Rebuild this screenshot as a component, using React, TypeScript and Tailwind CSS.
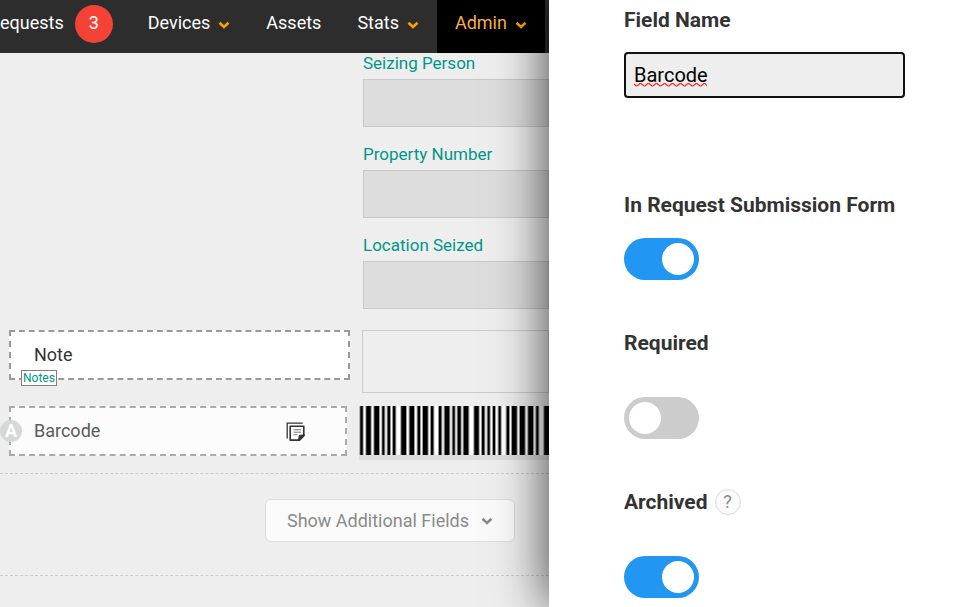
import { useId, useState } from "react";

const menu = [
  { label: "Devices", arrow: true, active: false },
  { label: "Assets", arrow: false, active: false },
  { label: "Stats", arrow: true, active: false },
  { label: "Admin", arrow: true, active: true },
];

// [start, width] of each bar, in thirds of a pixel
const bars = [
  [4, 7], [22, 13], [46, 14], [70, 6], [86, 7], [102, 7], [127, 14],
  [152, 13], [176, 7], [192, 14], [216, 7], [240, 7], [257, 14], [281, 6],
  [296, 9], [314, 14], [346, 13], [369, 7], [386, 6], [402, 6], [419, 6],
  [443, 7], [459, 14], [483, 14], [508, 14], [532, 6], [556, 18],
];

function Chevron() {
  return (
    <svg className="h-2 w-3 shrink-0" viewBox="0 0 12 8" fill="none" stroke="currentColor" strokeWidth="2.6">
      <path d="M1.5 1.700 L6 6 L10.500 1.700" />
    </svg>
  );
}

function Field({ label }: { label: string }) {
  const id = useId();
  return (
    <div>
      <label htmlFor={id} className="block text-[17px] leading-5 text-[#009688]">
        {label}
      </label>
      <input
        id={id}
        disabled
        className="mt-1.5 block h-12 w-full border border-[#c8c8c8] bg-[#dddddd] px-3"
      />
    </div>
  );
}

function Toggle({ id, initial }: { id: string; initial: boolean }) {
  const [on, setOn] = useState(initial);
  return (
    <div className="relative h-[42px] w-[75px]">
      <input
        id={id}
        type="checkbox"
        checked={on}
        onChange={(e) => setOn(e.target.checked)}
        className="peer block h-full w-full cursor-pointer appearance-none rounded-full bg-[#cccccc] checked:bg-[#2196f3]"
      />
      <span className="pointer-events-none absolute top-[5px] left-[5px] size-8 rounded-full bg-white peer-checked:left-[38px]" />
    </div>
  );
}

function NoteIcon() {
  return (
    <svg className="size-[19px]" viewBox="0 0 19 19" fill="none" stroke="#333" strokeWidth="1.3">
      <path d="M1.200 16.500V1.200h15.500" />
      <path d="M4.200 4.200h13.600v9.300l-4.600 4.600h-9z" strokeWidth="1.6" strokeLinejoin="round" />
      <path d="M12.500 18.200l1-4.700 4.500-.5-.3 1.200-4 4z" fill="#333" />
      <path d="M7.500 7.700h7.500M7.500 10.200h7.500M7.500 12.700h4" stroke="#777" strokeWidth="1" />
    </svg>
  );
}

function NavBar() {
  return (
    <nav className="flex h-[53px] bg-[#2d2d2d] text-lg leading-6 text-white">
      <a href="#requests" className="flex shrink-0 items-center pb-[7px]">
        equests
      </a>
      <span className="mt-[5px] ml-[11px] flex size-[38px] shrink-0 items-center justify-center rounded-full bg-[#f44336] pb-0.5">
        3
      </span>
      <div className="ml-[17px] flex min-w-0">
        {menu.map((item) => (
          <a
            key={item.label}
            href={`#${item.label.toLowerCase()}`}
            className={`flex shrink-0 items-center gap-2 px-[18px] pb-[7px] ${
              item.active ? "bg-black text-[#f9b04b]" : ""
            }`}
          >
            {item.label}
            {item.arrow && (
              <span className="pt-1 text-[#ffa000]">
                <Chevron />
              </span>
            )}
          </a>
        ))}
      </div>
    </nav>
  );
}

function FormEditor() {
  return (
    <main className="flex min-w-0 flex-1 flex-col overflow-hidden bg-[#eeeeee]">
      <NavBar />

      <div className="ml-[363px] flex flex-col gap-[17px]">
        <Field label="Seizing Person" />
        <Field label="Property Number" />
        <Field label="Location Seized" />
      </div>

      <div className="mt-[21px] flex items-start gap-3 pl-[9px]">
        <div className="relative flex h-[50px] w-[341px] shrink-0 items-center border-2 border-dashed border-[#999999] bg-white pl-[23px] text-lg text-[#333333]">
          Note
          <span className="absolute top-[38px] left-[10px] border border-[#808080] bg-white px-px text-xs leading-[14px] text-[#009688]">
            Notes
          </span>
        </div>
        <textarea
          aria-label="Note"
          className="h-[63px] min-w-0 flex-1 resize-none border border-[#cccccc]"
        />
      </div>

      <div className="mt-[13px] flex items-start gap-3 border-b border-dashed border-[#cccccc] pb-[13px] pl-[9px]">
        <div className="relative flex h-[50px] w-[338px] shrink-0 items-center justify-between border-2 border-dashed border-[#aaaaaa] bg-[#fcfcfc] pr-10 pl-[23px] text-lg text-[#5a5a5a]">
          Barcode
          <NoteIcon />
          <span className="absolute top-3 -left-[11px] flex size-[22px] items-center justify-center rounded-full bg-[#d6d8d7] text-lg font-bold text-white">
            A
          </span>
        </div>
        <div className="min-w-0 flex-1 overflow-hidden border-b-[5px] border-[#dddddd] bg-white">
          <svg className="h-[49px] w-[190px]" viewBox="0 0 570 147" role="img" aria-label="Barcode">
            {bars.map(([x, w]) => (
              <g key={x}>
                <rect x={x - 3} width={w + 6} height="147" fill="#999" />
                <rect x={x} width={w} height="147" />
              </g>
            ))}
          </svg>
        </div>
      </div>

      <div className="flex border-b border-dashed border-[#cccccc] pt-[25px] pb-[33px] pl-[265px]">
        <button
          type="button"
          className="flex h-[43px] w-[250px] shrink-0 items-center justify-center gap-3 rounded-md border border-[#dddddd] bg-[#fafafa] text-lg text-[#8a8a8a]"
        >
          Show Additional Fields
          <Chevron />
        </button>
      </div>
    </main>
  );
}

function SettingsPanel() {
  const [name, setName] = useState("Barcode");
  return (
    <aside className="relative w-[408px] shrink-0 bg-white pr-[52px] pl-[75px] text-[21px] leading-7 font-bold text-[#333333] shadow-[0_0_50px_rgba(0,0,0,0.75)]">
      <label htmlFor="field-name" className="mt-[6px] block">
        Field Name
      </label>
      <div className="relative mt-[18px]">
        <input
          id="field-name"
          value={name}
          spellCheck={false}
          onChange={(e) => setName(e.target.value)}
          className="block h-[46px] w-full rounded border-2 border-[#111111] bg-[#eeeeee] px-2 text-xl font-normal text-black outline-none"
        />
        <svg className="pointer-events-none absolute top-[31px] left-[10px] h-1 w-[73px]" viewBox="0 0 73 4" fill="none" stroke="#ff2222" strokeWidth="1.2">
          <path d="M0 1l2 2h1l3-2.500h1l3 2.500h1l3-2.500h1l3 2.500h1l3-2.500h1l3 2.500h1l3-2.500h1l3 2.500h1l3-2.500h1l3 2.500h1l3-2.500h1l3 2.500h1l3-2.500h1l3 2.500h1l3-2.500h1l3 2.500h1l3-2.500h1l2 2.500" />
        </svg>
      </div>

      <label htmlFor="in-form" className="mt-[93px] block">
        In Request Submission Form
      </label>
      <div className="mt-[19px]">
        <Toggle id="in-form" initial={true} />
      </div>

      <label htmlFor="required" className="mt-[49px] block">
        Required
      </label>
      <div className="mt-10">
        <Toggle id="required" initial={false} />
      </div>

      <div className="mt-[49px] flex items-center gap-[7px]">
        <label htmlFor="archived">Archived</label>
        <button
          type="button"
          aria-label="About archived fields"
          className="flex size-[26px] items-center justify-center rounded-full border border-[#dddddd] bg-[#fafafa] text-lg font-normal text-[#888888]"
        >
          ?
        </button>
      </div>
      <div className="mt-10">
        <Toggle id="archived" initial={true} />
      </div>
    </aside>
  );
}

export default function App() {
  return (
    <div className="flex h-screen overflow-hidden font-['Roboto',sans-serif]">
      <FormEditor />
      <SettingsPanel />
    </div>
  );
}
